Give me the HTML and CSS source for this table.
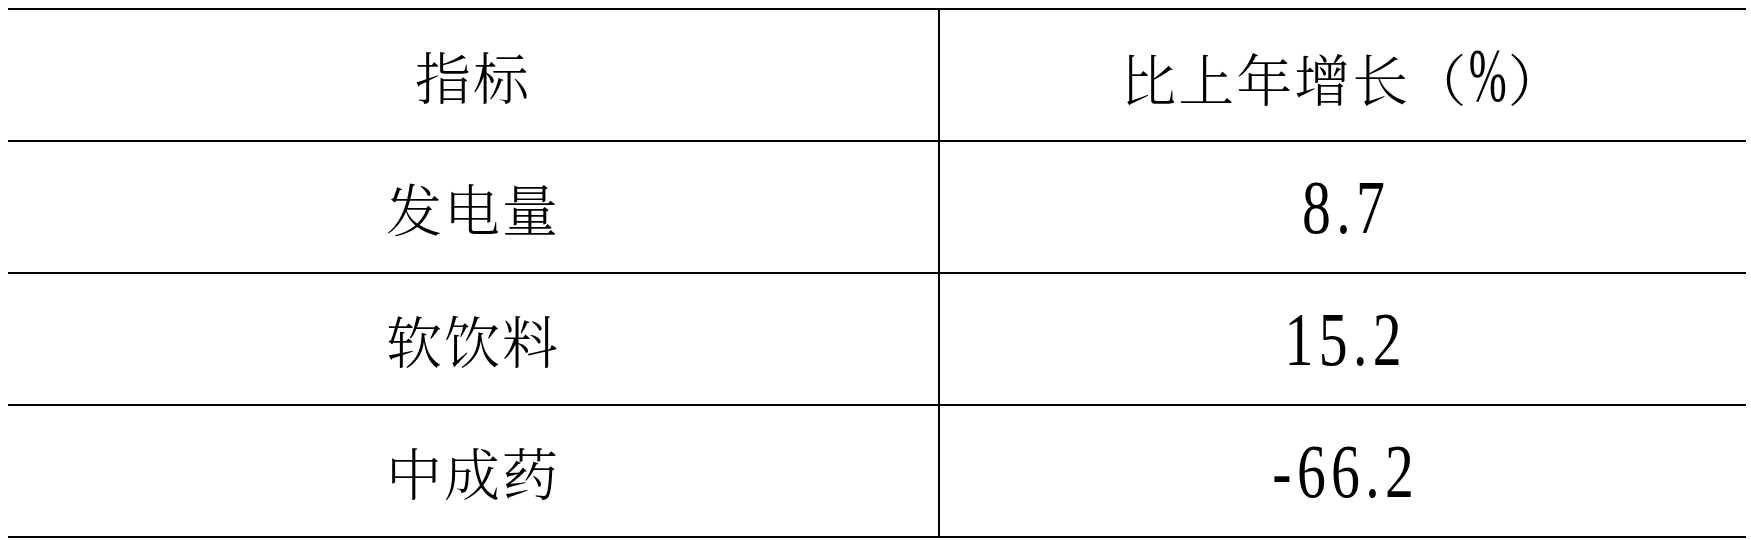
FILE: index.html
```html
<!DOCTYPE html>
<html lang="zh-CN">
<head>
<meta charset="utf-8">
<title>指标</title>
<link rel="stylesheet" href="styles.css">
</head>
<body>
<table class="data">
  <tr>
    <td class="label">指标</td>
    <td class="value">比上年增长（<span class="num pct">%</span>）</td>
  </tr>
  <tr>
    <td class="label">发电量</td>
    <td class="value"><span class="num">8.7</span></td>
  </tr>
  <tr>
    <td class="label">软饮料</td>
    <td class="value"><span class="num">15.2</span></td>
  </tr>
  <tr>
    <td class="label">中成药</td>
    <td class="value"><span class="num">-66.2</span></td>
  </tr>
</table>
</body>
</html>
```

FILE: styles.css
```css
html, body {
  margin: 0;
  padding: 0;
  background: #ffffff;
}

body {
  padding: 8px 5px 0 8px;
  font-family: "Noto Serif CJK SC", "Noto Sans CJK SC", serif;
  color: #000000;
}

.data {
  width: 1738px;
  border-collapse: separate;
  border-spacing: 0;
  table-layout: fixed;
}

.data td {
  height: 130px;
  padding: 0;
  text-align: center;
  vertical-align: middle;
  font-size: 56px;
  font-weight: 300;
  line-height: 1;
  border-bottom: 2px solid #000000;
}

.data tr:first-child td {
  border-top: 2px solid #000000;
}

.data td.label {
  width: 930px;
  border-right: 2px solid #000000;
  letter-spacing: 2px;
}

.data td.value {
  letter-spacing: 2px;
}

.num {
  display: inline-block;
  font-family: "Liberation Serif", serif;
  font-weight: 400;
  font-size: 76px;
  letter-spacing: 7px;
  padding-left: 7px;
  transform: scaleX(0.76);
  transform-origin: center;
}

.num.pct {
  letter-spacing: 0;
  padding-left: 0;
  transform: scaleX(0.6);
  margin: 0 -12px;
}
```
